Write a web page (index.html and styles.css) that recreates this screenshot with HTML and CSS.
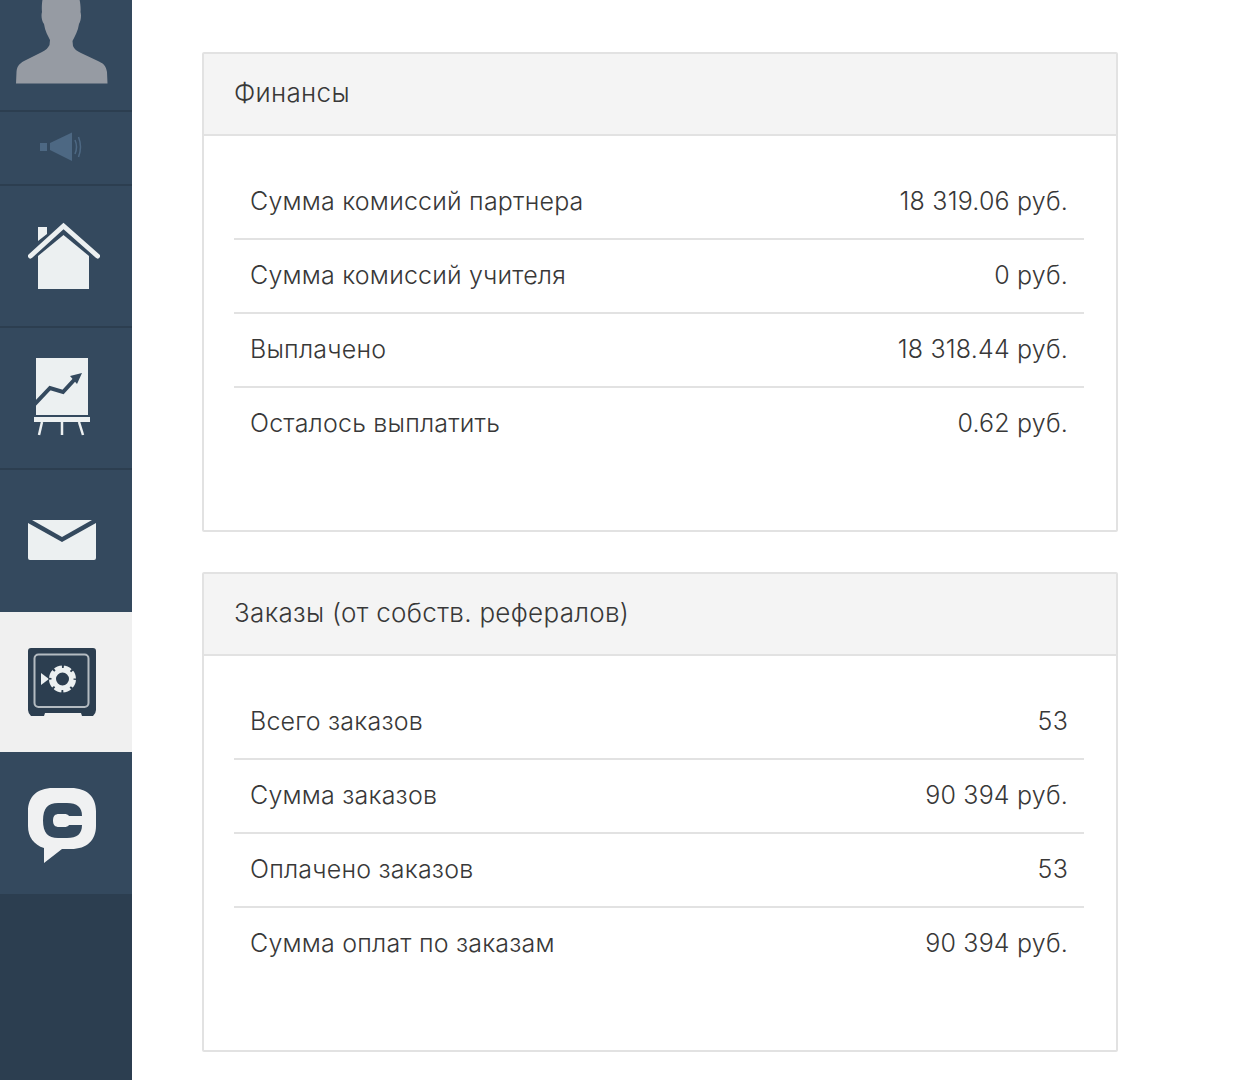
FILE: index.html
```html
<!DOCTYPE html>
<html lang="ru">
<head>
<meta charset="utf-8">
<title>Финансы</title>
<link rel="stylesheet" href="styles.css">
</head>
<body>
<div class="layout">
  <nav class="sidebar">
    <div class="nav-item nav-avatar">
      <svg class="icon" width="92" height="84" viewBox="0 0 92 84"><path fill="#969ba3" d="M27 -2C26 0 25.500 8 26 12C25 15 25.500 21 28 24C29 31 32 36 34 40L33.500 45C32 48 30 50 26 52L8 61C3 64 1 66 0.500 72L0 83.500H91.500L91 72C90 66 88 64 83 61.500L65 53C61 51 58 49 57 46L56.500 41C59 36 62 31 63 24C65 21 65.500 15 64.500 12C65 8 64 0 63 -2Z"/></svg>
    </div>
    <div class="nav-item nav-sound">
      <svg class="icon" width="44" height="32" viewBox="0 0 44 32"><g fill="#4d6883"><rect x="0" y="11" width="7" height="8"/><path d="M10 11L32 0.500V29L10 18Z"/></g><g fill="none" stroke="#4d6883" stroke-width="1.500"><path d="M35 8Q38 15 35 22"/><path d="M38.500 5Q42.500 15 38.500 25"/></g></svg>
    </div>
    <div class="nav-item nav-tall nav-home">
      <svg class="icon" width="72" height="68" viewBox="0 0 72 68"><g fill="#ecf0f1"><path d="M10 6H19V13L10 20Z"/><path d="M35.500 14L61 35V68H10V35Z"/></g><path d="M2.500 35L35.500 5L69.500 35" fill="none" stroke="#ecf0f1" stroke-width="5" stroke-linecap="round"/></svg>
    </div>
    <div class="nav-item nav-tall nav-chart">
      <svg class="icon" width="56" height="78" viewBox="0 0 56 78"><path fill="#ecf0f1" d="M2 0H54V57H2Z"/><path fill="none" stroke="#34495e" stroke-width="4" d="M0 47L16 30L29 34L41 21"/><path fill="#34495e" d="M48 15L36 18L43 26Z"/><rect x="0" y="59" width="56" height="5" fill="#ecf0f1"/><g fill="none" stroke="#ecf0f1" stroke-width="2.500"><path d="M8 64L5 77"/><path d="M28 64V77"/><path d="M45 64L49 77"/></g></svg>
    </div>
    <div class="nav-item nav-tall nav-mail">
      <svg class="icon" width="68" height="41" viewBox="0 0 68 41"><path fill="#ecf0f1" d="M0 3L34 22L68 3V38Q68 40 66 40H2Q0 40 0 38Z"/><path fill="#ecf0f1" d="M4 0H64L34 17Z"/></svg>
    </div>
    <div class="nav-item nav-active">
      <svg class="icon" width="68" height="68" viewBox="0 0 68 68"><path fill="#2c3e50" d="M3 0H65Q68 0 68 3V62Q68 65 65 68H54L53 65H17L16 68H3Q0 65 0 62V3Q0 0 3 0Z"/><rect x="6.500" y="6.500" width="54" height="52.500" rx="4" fill="none" stroke="#b4bbc1" stroke-width="2"/><path fill="#ecf0f1" d="M13 25L21 31L13 37Z"/><circle cx="34.500" cy="31" r="10" fill="none" stroke="#ecf0f1" stroke-width="7"/><circle cx="34.500" cy="31" r="12.500" fill="none" stroke="#2c3e50" stroke-width="3" stroke-dasharray="2 7.820" stroke-dashoffset="1"/></svg>
    </div>
    <div class="nav-item nav-tall nav-chat">
      <svg class="icon" width="68" height="76" viewBox="0 0 68 76"><path fill="#f0f1f2" d="M25 1H43C59 1 68 10 68 24V39C68 53 59 62 43 62H34L16 76V61C6 58 0 50 0 39V24C0 10 9 1 25 1Z"/><path fill="#34495e" d="M30 16H39C49 16 54 20 54 29H41C40 27.500 38.500 27 36 27H31C27 27 25 29 25 33.500C25 38 27 40 31 40H36C38.500 40 40 39.500 41 38H54C54 47 49 51 39 51H30C20 51 15 46 15 33.500C15 21 20 16 30 16Z"/></svg>
    </div>
    <div class="nav-rest"></div>
  </nav>
  <main class="content">
    <section class="panel">
      <h2 class="panel-title">Финансы</h2>
      <div class="panel-body">
        <div class="row"><span>Сумма комиссий партнера</span><span>18 319.06 руб.</span></div>
        <div class="row"><span>Сумма комиссий учителя</span><span>0 руб.</span></div>
        <div class="row"><span>Выплачено</span><span>18 318.44 руб.</span></div>
        <div class="row"><span>Осталось выплатить</span><span>0.62 руб.</span></div>
      </div>
    </section>
    <section class="panel">
      <h2 class="panel-title">Заказы (от собств. рефералов)</h2>
      <div class="panel-body">
        <div class="row"><span>Всего заказов</span><span>53</span></div>
        <div class="row"><span>Сумма заказов</span><span>90 394 руб.</span></div>
        <div class="row"><span>Оплачено заказов</span><span>53</span></div>
        <div class="row"><span>Сумма оплат по заказам</span><span>90 394 руб.</span></div>
      </div>
    </section>
  </main>
</div>
</body>
</html>
```
FILE: styles.css
```css
* { box-sizing: border-box; }
html, body { margin: 0; height: 1080px; overflow: hidden; background: #fff; }
body { font-family: "Inter", "Open Sans", sans-serif; color: #383838; }
.layout { display: flex; height: 1080px; }
.sidebar { width: 132px; flex: none; display: flex; flex-direction: column; background: #2c3e50; }
.icon { filter: blur(0.5px); }
.nav-item { display: flex; justify-content: center; align-items: center; background: #34495e; border-bottom: 2px solid #2c3e50; padding-right: 4px; }
.nav-avatar { height: 112px; align-items: flex-start; overflow: hidden; padding-right: 9px; }
.nav-sound { height: 74px; padding-right: 8px; }
.nav-tall { height: 142px; }
.nav-home .icon { margin-bottom: 2px; }
.nav-chart { padding-right: 8px; }
.nav-chart .icon { margin-bottom: 2px; }
.nav-mail { border-bottom: 0; padding-right: 8px; }
.nav-mail .icon { margin-bottom: 1px; }
.nav-active { height: 140px; background: #f0f0f0; border-bottom: 0; padding-right: 8px; }
.nav-chat { border-bottom: 0; padding-right: 8px; }
.nav-chat .icon { margin-top: 4px; }
.nav-rest { flex: 1; }
.content { flex: none; width: 916px; margin-left: 70px; padding-top: 52px; display: flex; flex-direction: column; gap: 40px; }
.panel { height: 480px; border: 2px solid #e2e2e2; border-radius: 2px; background: #fff; }
.panel-title { margin: 0; height: 82px; padding: 0 30px 4px; display: flex; align-items: center; font-size: 26px; font-weight: 300; letter-spacing: 0.3px; background: #f4f4f4; border-bottom: 2px solid #e2e2e2; }
.panel-body { padding: 30px 32px 0 30px; }
.row { height: 74px; padding: 0 16px 2px; display: flex; justify-content: space-between; align-items: center; font-size: 25px; font-weight: 300; letter-spacing: 0.2px; border-bottom: 2px solid #e2e2e2; }
.row:last-child { height: 72px; border-bottom: 0; }
```
